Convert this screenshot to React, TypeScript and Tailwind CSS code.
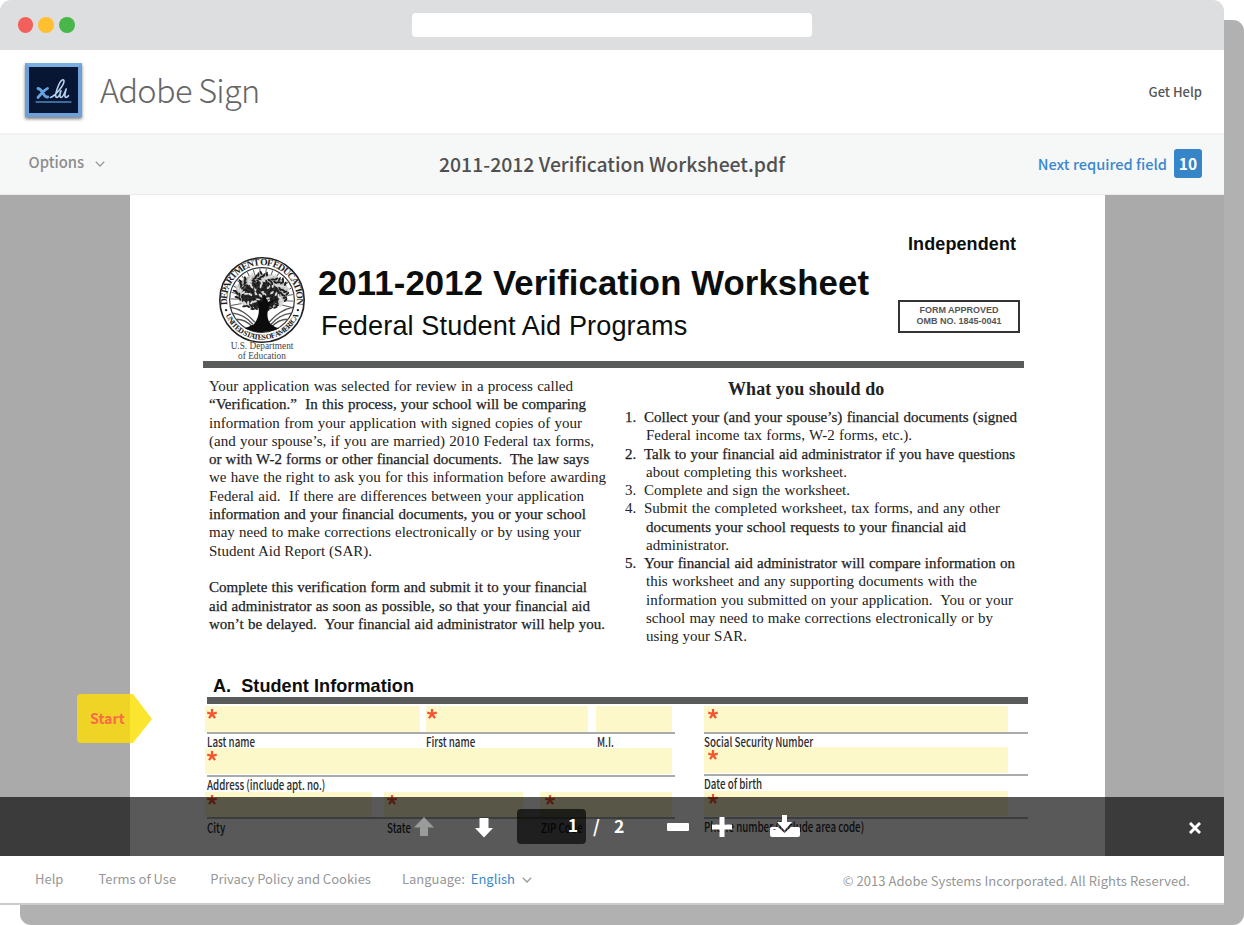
import React from "react";

const ui = "font-['Noto_Sans_CJK_SC','Noto_Sans',sans-serif]";
const serif = "font-['Liberation_Serif',serif]";
const sans = "font-['Liberation_Sans',sans-serif]";
const justified = "whitespace-pre [text-align-last:justify]";
const heavy = "text-[#1c1c1c] [-webkit-text-stroke:0.25px_#222]";

type TextLine = { text: string; width: string; strong?: boolean };

const intro: TextLine[] = [
  { text: "Your application was selected for review in a process called", width: "w-[364px]" },
  { text: "“Verification.”  In this process, your school will be comparing", width: "w-[377px]", strong: true },
  { text: "information from your application with signed copies of your", width: "w-[373px]" },
  { text: "(and your spouse’s, if you are married) 2010 Federal tax forms,", width: "w-[385px]" },
  { text: "or with W-2 forms or other financial documents.  The law says", width: "w-[380px]", strong: true },
  { text: "we have the right to ask you for this information before awarding", width: "w-[397px]" },
  { text: "Federal aid.  If there are differences between your application", width: "w-[375px]" },
  { text: "information and your financial documents, you or your school", width: "w-[377px]", strong: true },
  { text: "may need to make corrections electronically or by using your", width: "w-[372px]" },
  { text: "Student Aid Report (SAR).", width: "w-[163px]" },
  { text: "", width: "w-[10px]" },
  { text: "Complete this verification form and submit it to your financial", width: "w-[378px]", strong: true },
  { text: "aid administrator as soon as possible, so that your financial aid", width: "w-[381px]", strong: true },
  { text: "won’t be delayed.  Your financial aid administrator will help you.", width: "w-[396px]", strong: true },
];

const steps: TextLine[][] = [
  [
    { text: "Collect your (and your spouse’s) financial documents (signed", width: "w-[373px]", strong: true },
    { text: "Federal income tax forms, W-2 forms, etc.).", width: "w-[266px]" },
  ],
  [
    { text: "Talk to your financial aid administrator if you have questions", width: "w-[371px]", strong: true },
    { text: "about completing this worksheet.", width: "w-[201px]" },
  ],
  [{ text: "Complete and sign the worksheet.", width: "w-[206px]" }],
  [
    { text: "Submit the completed worksheet, tax forms, and any other", width: "w-[356px]" },
    { text: "documents your school requests to your financial aid", width: "w-[320px]", strong: true },
    { text: "administrator.", width: "w-[83px]" },
  ],
  [
    { text: "Your financial aid administrator will compare information on", width: "w-[371px]", strong: true },
    { text: "this worksheet and any supporting documents with the", width: "w-[331px]" },
    { text: "information you submitted on your application.  You or your", width: "w-[367px]" },
    { text: "school may need to make corrections electronically or by", width: "w-[347px]" },
    { text: "using your SAR.", width: "w-[101px]" },
  ],
];

function Logo() {
  return (
    <div className="mb-[4px] h-[54px] w-[57px] border-4 border-[#6d9fd8] border-t-[#79aee0] bg-[#071633] shadow-[0_2px_3px_rgba(0,0,0,0.5)]">
      <svg viewBox="0 0 49 46" className="h-[46px] w-[49px]" fill="none" strokeLinecap="round" strokeLinejoin="round">
        <path d="M9 21.500c2.500.2 3.500 1.800 4.800 4.300s2.500 4.600 5 4.200M18.500 21.500c-3 1-6.500 5.500-9.500 9" stroke="#66a3e0" strokeWidth="2.800" />
        <path d="M21.500 30.500c5-2 13.500-12 13.500-16.500 0-2.300-3-1.300-5 3.200-1.700 4-4.500 10.300-3 12.800 1.500 1.500 4.500-2 5-6.300M31.500 24.500c-.8 3.500-.8 5.800.5 6 2 0 3.700-4.500 5.200-8.500-1 3.500-2.300 8-.3 8.500 1 0 1.800-.7 2.600-1.800" stroke="#b5d3f0" strokeWidth="1.600" />
        <path d="M7 35h35" stroke="#4f86bd" strokeWidth="1.400" />
      </svg>
    </div>
  );
}

function Chevron({ className }: { className: string }) {
  return (
    <svg viewBox="0 0 10 6" className={className} fill="none" stroke="#999" strokeWidth="1.300">
      <path d="M.8.8 5 5 9.200.8" />
    </svg>
  );
}

function Seal() {
  const leaves = Array.from({ length: 150 }, (_, i) => {
    const a = i * 2.399;
    const r = Math.sqrt(i / 150);
    return { x: 43 + Math.cos(a) * r * 27, y: 35 + Math.sin(a) * r * 19, rot: (i * 67) % 180, dark: i % 3 !== 0 };
  });
  return (
    <svg viewBox="0.5 0.5 85 85" className="h-[86px] w-[86px] shrink-0">
      <defs>
        <path id="arc-top" d="M9.200 50A34.500 34.500 0 1 1 76.800 50" />
        <path id="arc-bottom" d="M4.800 51A39 39 0 0 0 81.200 51" />
      </defs>
      <circle cx="43" cy="43" r="41.700" fill="#fff" stroke="#222" strokeWidth="1.600" />
      <circle cx="43" cy="43" r="32" fill="#fff" stroke="#333" strokeWidth="1.200" />
      <g stroke="#555" strokeWidth=".9" fill="none">
        {Array.from({ length: 18 }, (_, i) => (
          <path key={i} d="M43 25V12" transform={`rotate(${-100 + i * 12} 43 43)`} />
        ))}
        <path d="M12 50c10 2 18 8 24 15M14 56c8 1 15 5 20 11M18 62c7 0 11 3 15 7M74 50c-10 2-18 8-24 15M72 56c-8 1-15 5-20 11M68 62c-7 0-11 3-15 7" strokeWidth="1.300" />
      </g>
      <ellipse cx="43" cy="35" rx="26" ry="18" fill="#bbb" />
      <ellipse cx="42" cy="38" rx="19" ry="13" fill="#333" />
      {leaves.map((l, i) => (
        <ellipse key={i} cx={l.x} cy={l.y} rx="2.300" ry="1" fill={l.dark ? "#1c1c1c" : "#ddd"} transform={`rotate(${l.rot} ${l.x} ${l.y})`} />
      ))}
      <path d="M39 44c2 9 1 17-4 23-4 2-7 3-9 4 10 5 24 5 34 0-4-1-7-3-9-5-4-6-3-12 0-19l8-6-10 4-4-8-2 8-10-4z" fill="#0c0c0c" />
      <g fill="#222" className="font-['Liberation_Serif',serif] font-bold">
        <text fontSize="9.500"><textPath href="#arc-top" startOffset="50%" textAnchor="middle" textLength="118">DEPARTMENT OF EDUCATION</textPath></text>
        <text fontSize="7.500"><textPath href="#arc-bottom" startOffset="50%" textAnchor="middle" textLength="92">UNITED STATES OF AMERICA</textPath></text>
      </g>
      <circle cx="7.500" cy="53" r="1.200" fill="#222" />
      <circle cx="78.500" cy="53" r="1.200" fill="#222" />
    </svg>
  );
}

function Field({ width, required = true, pad = "pl-[2px]" }: { width: string; required?: boolean; pad?: string }) {
  return (
    <div className={`h-full bg-[#fdf8ca] pt-[3px] ${pad} ${width}`}>
      {required && (
        <svg viewBox="0 0 10 10" className="h-[10px] w-[10px]" fill="none" stroke="#f4552d" strokeWidth="2.300">
          <path d="M5 5V0M5 5 .2 3.700M5 5 9.800 3.700M5 5 2 9.200M5 5 8 9.200" />
        </svg>
      )}
    </div>
  );
}

function Label({ children, width }: { children: string; width: string }) {
  return (
    <div className={`h-full shrink-0 ${width}`}>
      <span className="inline-block origin-left scale-x-[0.75] whitespace-nowrap">{children}</span>
    </div>
  );
}

const labelRow = `flex text-[13px] font-medium text-[#2c2c2c] ${ui}`;
const rule = "h-[2px] bg-[#a9abab]";

function StudentForm() {
  return (
    <div className="ml-[75px] flex">
      <div className="w-[470px] pt-[2px]">
        <div className="flex h-[26px]">
          <Field width="w-[215px]" />
          <div className="w-[6px]" />
          <Field width="w-[162px]" pad="pl-[1px]" />
          <div className="w-[8px]" />
          <Field width="w-[76px]" required={false} />
        </div>
        <div className={`ml-[2px] ${rule}`} />
        <div className={`${labelRow} h-[14px] pl-[2px] leading-[16px]`}>
          <Label width="w-[219px]">Last name</Label>
          <Label width="w-[171px]">First name</Label>
          <Label width="w-[60px]">M.I.</Label>
        </div>
        <div className="h-[26px]"><Field width="w-[467px]" /></div>
        <div className={`mt-px ml-[2px] ${rule}`} />
        <div className={`${labelRow} h-[15px] pl-[2px] leading-[16px]`}>
          <Label width="w-[219px]">Address (include apt. no.)</Label>
        </div>
        <div className="flex h-[25px]">
          <Field width="w-[167px]" />
          <div className="w-[12px]" />
          <Field width="w-[139px]" pad="pl-[3px]" />
          <div className="w-[17px]" />
          <Field width="w-[132px]" pad="pl-[5px]" />
        </div>
        <div className={`ml-[2px] ${rule}`} />
        <div className={`${labelRow} h-[16px] pl-[2px] leading-[17px]`}>
          <Label width="w-[180px]">City</Label>
          <Label width="w-[154px]">State</Label>
          <Label width="w-[100px]">ZIP Code</Label>
        </div>
      </div>
      <div className="ml-[29px] w-[324px] pt-[2px]">
        <div className="h-[26px]"><Field width="w-[304px]" pad="pl-[4px]" /></div>
        <div className={rule} />
        <div className={`${labelRow} h-[13px] leading-[15px]`}>
          <Label width="w-[219px]">Social Security Number</Label>
        </div>
        <div className="h-[26px]"><Field width="w-[304px]" pad="pl-[4px]" /></div>
        <div className={`mt-px ${rule}`} />
        <div className={`${labelRow} h-[15px] leading-[16px]`}>
          <Label width="w-[219px]">Date of birth</Label>
        </div>
        <div className="h-[25px]"><Field width="w-[304px]" pad="pl-[4px]" /></div>
        <div className={`mt-px ${rule}`} />
        <div className={`${labelRow} h-[16px] leading-[16px]`}>
          <Label width="w-[219px]">Phone number (include area code)</Label>
        </div>
      </div>
    </div>
  );
}

function Worksheet() {
  return (
    <div className="h-[661px] w-[975px] bg-white text-[#0c0e0e]">
      <div className="ml-[73px] flex h-[166px] w-[821px]">
        <div className="flex w-[115px] flex-col items-center pt-[62px] pl-[3px]">
          <Seal />
          <div className={`-mt-[2px] h-[18px] w-[75px] shrink-0 text-center text-[9.300px] leading-[10.200px] text-[#444] ${serif}`}>
            <div className="whitespace-nowrap">U.S. Department</div>
            <div>of Education</div>
          </div>
        </div>
        <div className={`flex-1 pt-[68px] whitespace-nowrap ${sans}`}>
          <h1 className="text-[34.700px] leading-[40px] font-bold tracking-[0.13px]">2011-2012 Verification Worksheet</h1>
          <p className="ml-[3px] pt-[7px] text-[27.100px] leading-[32px] tracking-[0.120px]">Federal Student Aid Programs</p>
        </div>
        <div className={`mr-[4px] flex w-[122px] flex-col pt-[39px] ${sans}`}>
          <div className="ml-[10px] text-[18px] leading-[20px] font-bold tracking-[0.1px]">Independent</div>
          <div className="mt-[46px] h-[33px] border-2 border-[#333] pt-[3px] text-center text-[9px] leading-[11px] font-bold text-[#555]">
            <div>FORM APPROVED</div>
            <div>OMB NO. 1845-0041</div>
          </div>
        </div>
      </div>
      <div className="ml-[73px] h-[7px] w-[821px] bg-[#595b5b]" />

      <div className={`ml-[79px] flex h-[304px] text-[15px] text-[#222] ${serif}`}>
        <div className="w-[416px] pt-[9px] leading-[18.300px]">
          {intro.map((line, i) => (
            <div key={i} className={`h-[18.300px] ${line.width} ${justified} ${line.strong ? heavy : ""}`}>{line.text}</div>
          ))}
        </div>
        <div className="w-[400px] leading-[18.280px]">
          <h2 className="ml-[103px] pt-[10px] text-[18px] leading-[22px] font-bold tracking-[0.1px] whitespace-nowrap">What you should do</h2>
          <div className="pt-[8px]">
            {steps.map((step, i) => (
              <div key={i} className="flex">
                <div className={`w-[19px] shrink-0 ${step[0].strong ? heavy : ""}`}>{i + 1}.</div>
                <div>
                  {step.map((line, j) => (
                    <div key={j} className={`h-[18.280px] ${j ? "ml-[2px]" : ""} ${line.width} ${justified} ${line.strong ? heavy : ""}`}>{line.text}</div>
                  ))}
                </div>
              </div>
            ))}
          </div>
        </div>
      </div>

      <div className={`ml-[83px] flex h-[25px] gap-[10px] text-[18.100px] leading-[28px] font-bold tracking-[0.050px] ${sans}`}>
        <span>A.</span>
        <span>Student Information</span>
      </div>
      <div className="ml-[77px] h-[7px] w-[821px] bg-[#595b5b]" />
      <StudentForm />
    </div>
  );
}

function PageControls() {
  return (
    <div className={`absolute inset-x-0 bottom-0 flex h-[59px] items-center bg-black/65 text-white ${ui}`}>
      <svg viewBox="0 0 20 20" className="ml-[414px] h-[20px] w-[20px] shrink-0" fill="#999b9b"><path d="M10 0 20 10.500h-6V19H6v-8.500H0z" /></svg>
      <svg viewBox="0 0 18 20" className="mt-[2px] ml-[41px] h-[20px] w-[18px] shrink-0" fill="#fff"><path d="M9 19.500 0 10h4.500V0h9v10H18z" /></svg>
      <div className="ml-[24px] h-[35px] w-[69px] shrink-0 rounded-[4px] bg-black/65 pr-[8px] text-right text-[17.500px] leading-[32px] font-bold">1</div>
      <div className="-mt-[3px] ml-[7px] w-[10px] text-[17.500px] leading-[31px] font-bold">/</div>
      <div className="-mt-[3px] ml-[11px] w-[14px] text-[17.500px] leading-[31px] font-bold">2</div>
      <div className="ml-[39px] h-[8px] w-[22px] shrink-0 rounded-[1px] bg-white" />
      <svg viewBox="0 0 20 20" className="ml-[23px] h-[20px] w-[20px] shrink-0" fill="#fff"><path d="M7.500 0h5v7.500H20v5h-7.500V20h-5v-7.500H0v-5h7.500z" /></svg>
      <svg viewBox="0 0 30 22" className="-mt-[2px] ml-[38px] h-[22px] w-[30px] shrink-0" fill="#fff">
        <path d="M0 13.500q0-1.500 1.500-1.500H8l6.500 6L21 12h7.500q1.500 0 1.500 1.500V20q0 2-2 2H2q-2 0-2-2z" />
        <path d="M12 0h5v7h5l-7.500 8.500L7 7h5z" />
        <path d="M3.500 14.500h2" stroke="#595b5b" />
      </svg>
      <svg viewBox="0 0 12 12" className="mt-[2px] ml-[389px] h-[12px] w-[12px] shrink-0" stroke="#fff" strokeWidth="3"><path d="m1 1 10 10M11 1 1 11" /></svg>
    </div>
  );
}

export default function App() {
  return (
    <div className="relative h-[925px] w-[1244px] overflow-hidden bg-white">
      <div className="absolute top-[20px] left-[20px] h-[905px] w-[1224px] rounded-[11px] bg-[#b1b1b1]" />
      <div className={`relative flex h-[905px] w-[1224px] flex-col overflow-hidden rounded-t-[11px] bg-white ${ui}`}>
        <div className="flex h-[50px] shrink-0 items-center bg-[#dddee0]">
          <div className="ml-[17.500px] flex gap-[5.300px]">
            <span className="h-[15.500px] w-[15.500px] rounded-full bg-[#f3605b]" />
            <span className="h-[15.500px] w-[15.500px] rounded-full bg-[#ffbf2f]" />
            <span className="h-[15.500px] w-[15.500px] rounded-full bg-[#48b648]" />
          </div>
          <div className="ml-[337px] h-[24px] w-[400px] rounded-[4px] bg-white" />
        </div>
        <header className="flex h-[83px] shrink-0 items-center pr-[22px] pl-[25px]">
          <Logo />
          <div className="mb-[5px] ml-[18px] text-[32.500px] leading-[40px] font-light tracking-[-0.700px] text-[#666]">Adobe Sign</div>
          <div className="ml-auto text-[13px] font-medium text-[#555]">Get Help</div>
        </header>
        <div className="grid h-[62px] shrink-0 grid-cols-3 items-center border-t-2 border-b border-t-[#f0f2f2] border-b-[#e9ebeb] bg-[#f6f8f8]">
          <div className="mb-[4px] flex items-center pl-[28.500px] text-[14.800px] font-medium text-[#8c8c8c]">
            Options <Chevron className="mt-[2px] ml-[11px] h-[6px] w-[10px]" />
          </div>
          <div className="mb-[2px] text-center text-[19.400px] font-medium whitespace-nowrap text-[#505050]">2011-2012 Verification Worksheet.pdf</div>
          <div className="mb-[2px] flex items-center justify-end gap-[7px] pr-[22px] text-[14.600px] font-medium text-[#3988cf]">
            <span>Next required field</span>
            <span className="h-[29px] w-[28px] rounded-[3px] bg-[#3785c9] text-center text-[15.500px] leading-[29px] font-bold text-white">10</span>
          </div>
        </div>
        <main className="relative flex h-[661px] shrink-0 overflow-hidden bg-[#aaa] pl-[130px]">
          <Worksheet />
          <div className="absolute top-[499px] left-[77px] h-[49px] w-[75px]">
            <svg viewBox="0 0 75 49" className="absolute inset-0 h-[49px] w-[75px]">
              <path d="M4 0h49.500v49H4q-4 0-4-4V4q0-4 4-4z" fill="#efd425" />
              <path d="M53 0h3l19 25-19 24h-3z" fill="#fbe52f" />
            </svg>
            <span className="absolute top-0 left-[13px] text-[14.200px] leading-[48px] font-bold text-[#fb6a49]">Start</span>
          </div>
          <PageControls />
        </main>
        <footer className="flex flex-1 items-center border-b-2 border-[#ccc] pb-[2px] text-[13px] text-[#969696]">
          <span className="ml-[35px]">Help</span>
          <span className="ml-[35px]">Terms of Use</span>
          <span className="ml-[34px]">Privacy Policy and Cookies</span>
          <span className="ml-[31px]">Language:</span>
          <span className="ml-[6px] text-[#3988cf]">English</span>
          <Chevron className="mt-[2px] ml-[7px] h-[6px] w-[10px]" />
          <span className="mt-[4px] mr-[34px] ml-auto tracking-[0.050px]">© 2013 Adobe Systems Incorporated. All Rights Reserved.</span>
        </footer>
      </div>
    </div>
  );
}
